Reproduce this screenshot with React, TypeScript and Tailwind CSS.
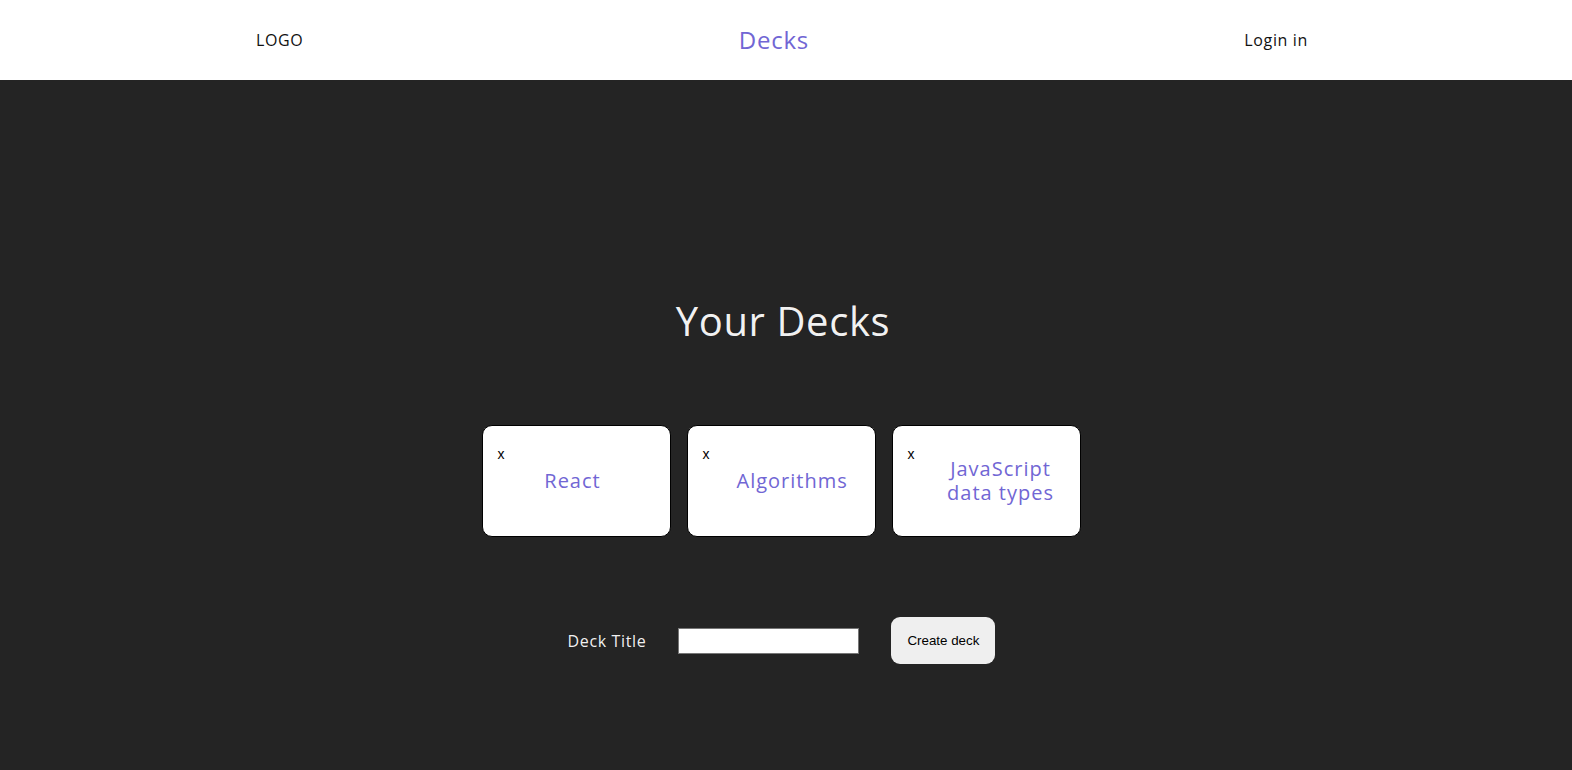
import React from "react";

const decks = [
  { id: 1, title: "React" },
  { id: 2, title: "Algorithms" },
  { id: 3, title: "JavaScript data types" },
];

export default function App() {
  return (
    <div className="min-h-[770px] flex flex-col bg-[#242424] font-['Open_Sans',sans-serif]">
      <header className="h-20 bg-white flex items-center justify-between pl-[256px] pr-[264px] text-[#111]">
        <div className="text-[16px] leading-6 tracking-[0.04em]">LOGO</div>
        <div className="text-[24px] leading-8 tracking-[0.03em] text-[#7166d4]">Decks</div>
        <div className="text-[16px] leading-6 tracking-[0.04em]">Login in</div>
      </header>
      <main className="flex-1 flex flex-col items-center">
        <h1 className="mt-[217px] text-[40px] leading-[48px] tracking-[0.015em] text-white/95 mr-[6px]">
          Your Decks
        </h1>
        <div className="mt-[80px] flex gap-4 mr-[10px]">
          {decks.map((d) => (
            <div
              key={d.id}
              className="w-[189px] h-[112px] bg-white border border-black rounded-[10px] flex items-start"
            >
              <button className="self-start mt-[21px] ml-[15px] text-[14px] leading-[15px] text-black font-['Liberation_Sans',Arial,sans-serif]">
                x
              </button>
              <div className="self-center ml-[27px] min-w-[82px] max-w-[118px] text-center text-[20px] leading-6 tracking-[0.05em] text-[#7166d4]">
                {d.title}
              </div>
            </div>
          ))}
        </div>
        <div className="mt-[80px] flex items-center gap-8 mr-[9px]">
          <label className="text-[16px] tracking-[0.04em] text-white/95">Deck Title</label>
          <input
            type="text"
            className="w-[181px] h-[26px] bg-white border border-[#767676] px-1 text-black text-[13.33px]"
          />
          <button className="w-[104px] h-[47px] rounded-[9px] bg-[#efefef] text-black text-[13.33px] font-['Liberation_Sans',Arial,sans-serif]">
            Create deck
          </button>
        </div>
      </main>
    </div>
  );
}
